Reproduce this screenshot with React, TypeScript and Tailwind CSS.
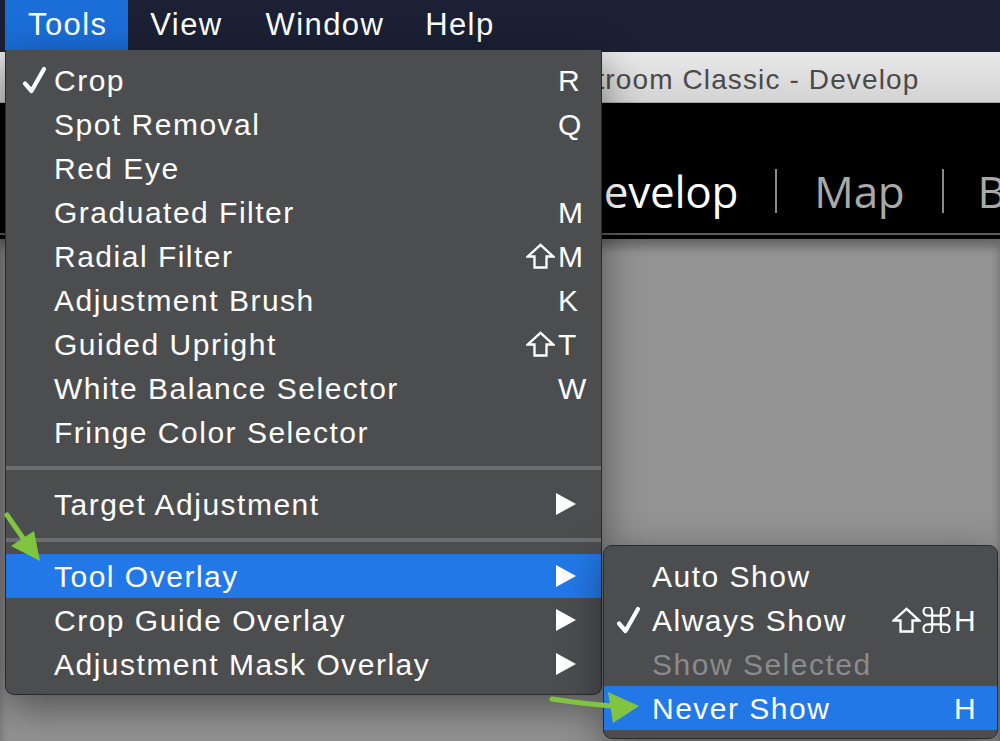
import React from 'react'

type Item =
    | 'sep'
    | {
          label: string
          check?: boolean
          mod?: ('shift' | 'cmd')[]
          letter?: string
          sub?: boolean
          active?: boolean
          disabled?: boolean
      }

const toolItems: Item[] = [
    { label: 'Crop', check: true, letter: 'R' },
    { label: 'Spot Removal', letter: 'Q' },
    { label: 'Red Eye' },
    { label: 'Graduated Filter', letter: 'M' },
    { label: 'Radial Filter', mod: ['shift'], letter: 'M' },
    { label: 'Adjustment Brush', letter: 'K' },
    { label: 'Guided Upright', mod: ['shift'], letter: 'T' },
    { label: 'White Balance Selector', letter: 'W' },
    { label: 'Fringe Color Selector' },
    'sep',
    { label: 'Target Adjustment', sub: true },
    'sep',
    { label: 'Tool Overlay', sub: true, active: true },
    { label: 'Crop Guide Overlay', sub: true },
    { label: 'Adjustment Mask Overlay', sub: true },
]

const overlayItems: Item[] = [
    { label: 'Auto Show' },
    { label: 'Always Show', check: true, mod: ['shift', 'cmd'], letter: 'H' },
    { label: 'Show Selected', disabled: true },
    { label: 'Never Show', letter: 'H', active: true },
]

const Check = () => (
    <svg width="25" height="28" viewBox="0 0 25 28" className="block">
        <path d="M3 17.5 L9.5 25 L22 3" fill="none" stroke="white" strokeWidth="4.2" strokeLinecap="round" strokeLinejoin="round" />
    </svg>
)

const Triangle = () => (
    <svg width="20" height="22" viewBox="0 0 20 22" className="block">
        <polygon points="0,0 20,11 0,22" fill="white" />
    </svg>
)

// shift key symbol
const ShiftKey = () => (
    <svg width="29" height="26" viewBox="0 0 29 26" className="block">
        <path d="M8.5 24.5 V13.5 H1.8 L14.5 1.8 L27.2 13.5 H20.5 V24.5 Z" fill="none" stroke="white" strokeWidth="2.3" strokeLinejoin="miter" />
    </svg>
)

// command key symbol
const CmdKey = () => (
    <svg width="29" height="26" viewBox="2.5 3 19 18" className="block">
        <path
            d="M15 6v12a3 3 0 1 0 3-3H6a3 3 0 1 0 3 3V6a3 3 0 1 0-3 3h12a3 3 0 1 0-3-3"
            fill="none"
            stroke="white"
            strokeWidth="1.5"
        />
    </svg>
)

const MenuRows = ({ items, checkPad }: { items: Item[]; checkPad: string }) => (
    <>
        {items.map((item, i) => {
            if (item === 'sep') {
                return (
                    <div key={'sep' + i} className="flex h-[28px] items-center">
                        <div className="h-[4px] w-full bg-[#6c6d70]" />
                    </div>
                )
            }
            return (
                <div
                    key={item.label}
                    className={`flex h-[44px] items-center ${item.active ? 'bg-[#2378e8]' : ''} ${item.disabled ? 'text-[#8b8b8d]' : 'text-white'}`}
                >
                    <div className={`flex w-[48px] shrink-0 justify-start ${checkPad}`}>{item.check && <Check />}</div>
                    <div className="flex-1 whitespace-nowrap">{item.label}</div>
                    <div className="flex w-[113px] shrink-0 items-center">
                        <div className="flex w-[70px] justify-end gap-[1px] pr-[3px]">
                            {item.mod?.map(m => (m === 'shift' ? <ShiftKey key={m} /> : <CmdKey key={m} />))}
                        </div>
                        <span>{item.letter}</span>
                        {item.sub && (
                            <span className="-ml-[2px]">
                                <Triangle />
                            </span>
                        )}
                    </div>
                </div>
            )
        })}
    </>
)

const Arrows = () => (
    <svg className="pointer-events-none absolute left-0 top-0" width="1000" height="741" viewBox="0 0 1000 741">
        <line x1="7" y1="515" x2="25" y2="541" stroke="#80c441" strokeWidth="5" strokeLinecap="round" />
        <polygon points="11,546 34,531 40,561" fill="#80c441" />
        <path d="M552 699 Q585 704 612 706" fill="none" stroke="#80c441" strokeWidth="5" strokeLinecap="round" />
        <polygon points="608,692 639,706 613,723" fill="#80c441" />
    </svg>
)

const App = () => {
    return (
        <div className="relative flex h-[741px] w-[1000px] flex-col overflow-hidden bg-[#939393] font-['Liberation_Sans',Arial,sans-serif]">
            {/* macOS menu bar */}
            <div className="flex h-[52px] shrink-0 items-start bg-[#1b2034] pl-[5px] text-[31px] tracking-[0.045em] text-white">
                <div className="flex h-[50px] items-center bg-[#1b6dd7] pl-[23px] pr-[21px]">Tools</div>
                <div className="flex h-[50px] items-center px-[22px]">View</div>
                <div className="flex h-[50px] items-center px-[21px]">Window</div>
                <div className="flex h-[50px] items-center pl-[20px] pr-[22px]">Help</div>
            </div>

            {/* window title bar */}
            <div className="flex h-[51px] shrink-0 items-center whitespace-nowrap border-b border-[#a9a9a9] bg-gradient-to-b from-[#e9e9e9] to-[#d3d3d3] pl-[539px] pt-[5px] text-[28px] tracking-[0.04em] text-[#4a4a4a]">
                Lightroom Classic - Develop
            </div>

            {/* module picker */}
            <div className="flex h-[132px] shrink-0 items-center gap-[37px] whitespace-nowrap border-b-2 border-[#5b5b5b] bg-black pl-[572px] pt-[46px] font-['Open_Sans',sans-serif] text-[44px] tracking-[-0.005em] text-[#a9a9a9]">
                <span className="shrink-0 text-white">Develop</span>
                <div className="h-[44px] w-[2px] shrink-0 bg-[#8a8a8a]" />
                <span className="shrink-0">Map</span>
                <div className="h-[44px] w-[2px] shrink-0 bg-[#8a8a8a]" />
                <span className="-ml-[3px] shrink-0">Book</span>
            </div>
            <div className="h-[4px] shrink-0 bg-black" />
            <div className="flex-1 bg-[#939393] shadow-[inset_0_8px_10px_rgba(0,0,0,0.3)]" />

            {/* Tools menu */}
            <div className="absolute left-[5px] top-[50px] w-[597px] rounded-b-[9px] border border-t-0 border-[#2a2a2b] bg-[#4c4d4f] py-[8px] text-[30px] tracking-[0.05em] shadow-[0_12px_40px_rgba(0,0,0,0.45)]">
                <MenuRows items={toolItems} checkPad="pl-[16px]" />
            </div>

            {/* Tool Overlay submenu */}
            <div className="absolute left-[603px] top-[545px] w-[395px] overflow-hidden rounded-[9px] border border-[#2a2a2b] bg-[#4c4d4f] py-[8px] text-[30px] tracking-[0.05em] shadow-[0_12px_40px_rgba(0,0,0,0.45)]">
                <MenuRows items={overlayItems} checkPad="pl-[12px]" />
            </div>

            <Arrows />
        </div>
    )
}

export default App
